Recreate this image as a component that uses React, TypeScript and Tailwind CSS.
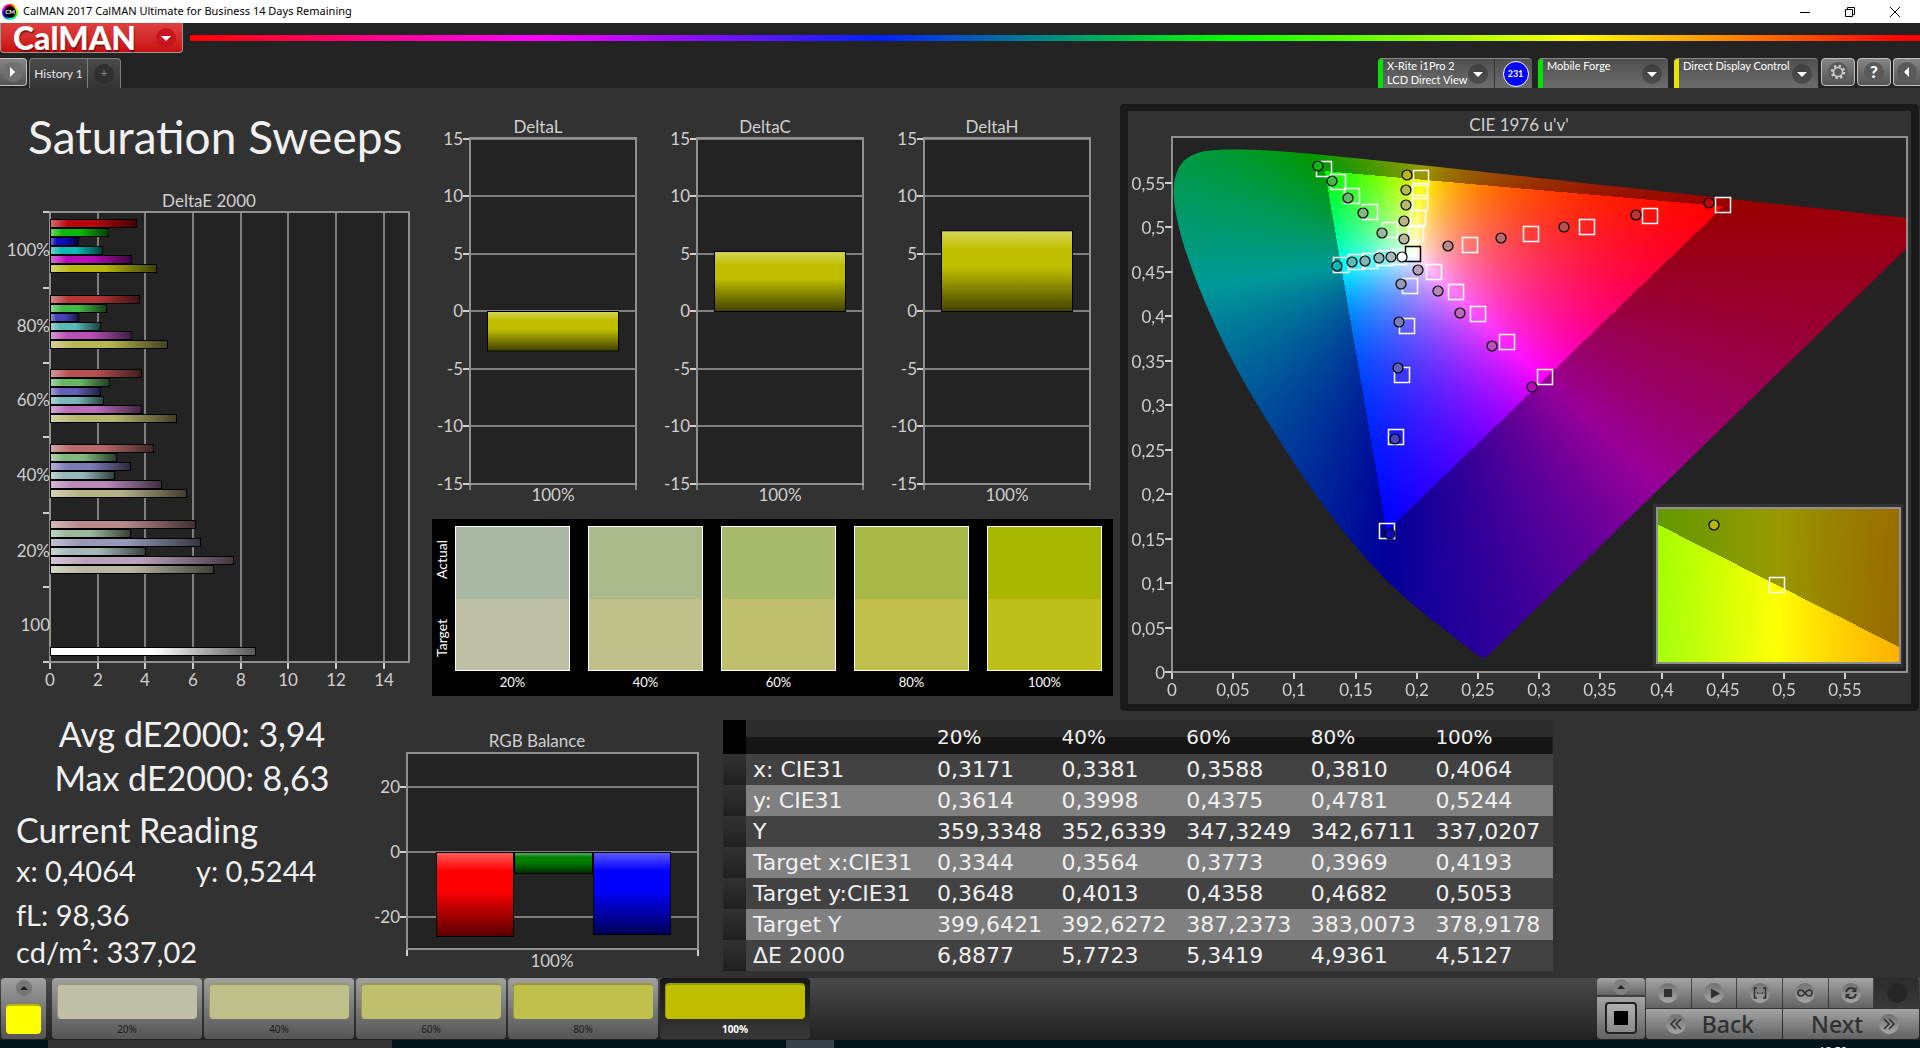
import { useEffect, useRef, type ReactNode } from "react";

type Point = [number, number];

const LEVELS = ["20%", "40%", "60%", "80%", "100%"];

const ACTUAL = ["#a9b8a2", "#a9b98a", "#a8ba6c", "#a8b94a", "#a8b800"];
const TARGET = ["#bfbfa5", "#bfbf8a", "#bfbf6e", "#bfbf4b", "#bfbf19"];
const PATCHES = ["#bfbfa5", "#bfbf8a", "#bfbf6e", "#bfbf4b", "#bfbf00"];

// red, green, blue, cyan, magenta, yellow
const PALETTE: Record<string, string[]> = {
  "100%": ["#b80808", "#0cb80c", "#0c0cb8", "#0cb8b8", "#b80cb8", "#b8b80c"],
  "80%": ["#b83838", "#44b844", "#4444b8", "#5ab8b8", "#b850b8", "#b8b850"],
  "60%": ["#b85050", "#64b864", "#6060b8", "#7ab8b8", "#b86cb8", "#b8b86c"],
  "40%": ["#b86a6a", "#80b880", "#7c7cb8", "#94b8b8", "#b888b8", "#b8b488"],
  "20%": ["#b88a8a", "#9cb89c", "#9898b8", "#a4b8b8", "#b8a0b8", "#b8b8a0"],
};

const DELTA_E = [
  { level: "100%", top: 223, values: [3.64, 2.46, 1.2, 2.21, 3.43, 4.51] },
  { level: "80%", top: 299, values: [3.76, 2.38, 1.2, 2.13, 3.43, 4.94] },
  { level: "60%", top: 373, values: [3.85, 2.5, 2.13, 2.25, 3.85, 5.34] },
  { level: "40%", top: 448, values: [4.35, 2.8, 3.38, 2.71, 4.69, 5.77] },
  { level: "20%", top: 524, values: [6.11, 3.38, 6.32, 4.01, 7.71, 6.89] },
];

const READINGS = [
  ["x: CIE31", "0,3171", "0,3381", "0,3588", "0,3810", "0,4064"],
  ["y: CIE31", "0,3614", "0,3998", "0,4375", "0,4781", "0,5244"],
  ["Y", "359,3348", "352,6339", "347,3249", "342,6711", "337,0207"],
  ["Target x:CIE31", "0,3344", "0,3564", "0,3773", "0,3969", "0,4193"],
  ["Target y:CIE31", "0,3648", "0,4013", "0,4358", "0,4682", "0,5053"],
  ["Target Y", "399,6421", "392,6272", "387,2373", "383,0073", "378,9178"],
  ["ΔE 2000", "6,8877", "5,7723", "5,3419", "4,9361", "4,5127"],
];

// CIE 1931 spectral locus (x, y), 380-700 nm
const LOCUS: Point[] = [
  [0.1741, 0.005], [0.1714, 0.0051], [0.1689, 0.0069], [0.1644, 0.0109],
  [0.1566, 0.0177], [0.151, 0.0227], [0.144, 0.0297], [0.1355, 0.0399],
  [0.1241, 0.0578], [0.1096, 0.0868], [0.0913, 0.1327], [0.0687, 0.2007],
  [0.0454, 0.295], [0.0235, 0.4127], [0.0082, 0.5384], [0.0039, 0.6548],
  [0.0139, 0.7502], [0.0389, 0.812], [0.0743, 0.8338], [0.1142, 0.8262],
  [0.1547, 0.8059], [0.1929, 0.7816], [0.2296, 0.7543], [0.3016, 0.6923],
  [0.3731, 0.6245], [0.4441, 0.5547], [0.5125, 0.4866], [0.5752, 0.4242],
  [0.627, 0.3725], [0.6658, 0.334], [0.6915, 0.3083], [0.719, 0.2809],
  [0.7347, 0.2653],
];

// marker positions inside the chromaticity plot, 20% to 100%
const TARGET_MARKS: Point[] = [
  [298, 108], [359, 97], [415, 90], [478, 79], [551, 68],
  [218, 93], [198, 75], [180, 59], [166, 45], [152, 32],
  [238, 149], [235, 189], [230, 238], [224, 300], [215, 394],
  [227, 120], [213, 121], [198, 124], [184, 125], [169, 128],
  [262, 135], [284, 155], [306, 177], [335, 205], [373, 240],
  [244, 97], [246, 81], [248, 66], [248, 54], [249, 41],
];

const ACTUAL_MARKS: Point[][] = [
  [[276, 109], [329, 101], [392, 90], [464, 78], [537, 66]],
  [[210, 96], [191, 76], [176, 61], [160, 44], [146, 29]],
  [[229, 147], [227, 185], [226, 231], [223, 302], [218, 397]],
  [[219, 120], [207, 121], [193, 124], [180, 125], [165, 129]],
  [[246, 133], [266, 154], [288, 176], [320, 209], [360, 250]],
  [[232, 102], [232, 84], [234, 68], [234, 53], [235, 38]],
];

const toUv = ([x, y]: Point): Point => {
  const d = -2 * x + 12 * y + 3;
  return [(4 * x) / d, (9 * y) / d];
};

/** Linear Rec.709 components, affine in u'v' */
const linear = (u: number, v: number) => {
  const x = 9 * u;
  const y = 4 * v;
  const z = 12 - 3 * u - 20 * v;
  return [
    3.2406 * x - 1.5372 * y - 0.4986 * z,
    -0.9689 * x + 1.8758 * y + 0.0415 * z,
    0.0557 * x - 0.204 * y + 1.057 * z,
  ];
};

const WHITE = linear(0.1978, 0.4683);

/** Fully bright colour; outside the gamut the nearest edge colour towards white, dimmed */
const uvToRgb = (u: number, v: number) => {
  const rgb = linear(u, v);
  let t = 1;
  rgb.forEach((c, i) => {
    if (c < 0) t = Math.min(t, WHITE[i] / (WHITE[i] - c));
  });
  const edge = rgb.map((c, i) => Math.max(0, WHITE[i] + t * (c - WHITE[i])));
  const max = Math.max(...edge);
  return edge.map((c) => (255 * (t < 1 ? 0.6 : 1) * c) / max);
};

interface GamutProps {
  width: number;
  height: number;
  u: Point;
  v: Point;
  clip?: boolean;
}

function Gamut({ width, height, u, v, clip }: GamutProps) {
  const ref = useRef<HTMLCanvasElement>(null);

  useEffect(() => {
    const ctx = ref.current?.getContext("2d");
    if (!ctx) return;
    const image = ctx.createImageData(width, height);
    for (let py = 0; py < height; py++) {
      for (let px = 0; px < width; px++) {
        const [r, g, b] = uvToRgb(
          u[0] + ((px + 0.5) / width) * (u[1] - u[0]),
          v[1] - ((py + 0.5) / height) * (v[1] - v[0]),
        );
        image.data.set([r, g, b, 255], (py * width + px) * 4);
      }
    }
    ctx.putImageData(image, 0, 0);

    if (clip) {
      ctx.globalCompositeOperation = "destination-in";
      ctx.beginPath();
      const points = LOCUS.map(toUv).map(([pu, pv]) => [
        ((pu - u[0]) / (u[1] - u[0])) * width,
        ((v[1] - pv) / (v[1] - v[0])) * height,
      ]);
      // Catmull-Rom spline through the locus, closed by the purple line
      ctx.moveTo(points[0][0], points[0][1]);
      for (let i = 0; i < points.length - 1; i++) {
        const p0 = points[Math.max(0, i - 1)];
        const p1 = points[i];
        const p2 = points[i + 1];
        const p3 = points[Math.min(points.length - 1, i + 2)];
        ctx.bezierCurveTo(
          p1[0] + (p2[0] - p0[0]) / 6,
          p1[1] + (p2[1] - p0[1]) / 6,
          p2[0] - (p3[0] - p1[0]) / 6,
          p2[1] - (p3[1] - p1[1]) / 6,
          p2[0],
          p2[1],
        );
      }
      ctx.closePath();
      ctx.fill();
      ctx.globalCompositeOperation = "source-over";
    }
  }, [width, height, u, v, clip]);

  return <canvas ref={ref} width={width} height={height} className="block" />;
}

const MAIN_U: Point = [0, 0.6008];
const MAIN_V: Point = [0, 0.6008];
const INSET_U: Point = [0.1805, 0.2277];
const INSET_V: Point = [0.5493, 0.5565];

function Shades() {
  return (
    <svg width="0" height="0" className="absolute">
      <defs>
        <linearGradient id="shade-x">
          <stop offset="0" stopColor="#fff" stopOpacity="0.4" />
          <stop offset="0.2" stopColor="#fff" stopOpacity="0" />
          <stop offset="0.5" stopColor="#000" stopOpacity="0" />
          <stop offset="1" stopColor="#000" stopOpacity="0.65" />
        </linearGradient>
        <linearGradient id="shade-y" x2="0" y2="1">
          <stop offset="0" stopColor="#fff" stopOpacity="0.35" />
          <stop offset="0.22" stopColor="#fff" stopOpacity="0" />
          <stop offset="0.45" stopColor="#000" stopOpacity="0" />
          <stop offset="1" stopColor="#000" stopOpacity="0.65" />
        </linearGradient>
      </defs>
    </svg>
  );
}

interface BarProps {
  x: number;
  y: number;
  width: number;
  height: number;
  fill: string;
  shade: string;
}

function Bar({ x, y, width, height, fill, shade }: BarProps) {
  return (
    <>
      <rect x={x} y={y} width={width} height={height} fill="#000" />
      <rect x={x + 1} y={y + 1} width={width - 2} height={height - 2} fill={fill} />
      <rect x={x + 1} y={y + 1} width={width - 2} height={height - 2} fill={`url(#${shade})`} />
    </>
  );
}

const chartClass = "block h-auto w-full fill-[#cfcfcf] font-[Lato,sans-serif] text-[17px]";

function DeltaEChart() {
  const scale = 23.83;
  return (
    <svg viewBox="0 190 430 510" className={chartClass} role="img" aria-label="DeltaE 2000">
      <text x="209" y="207" textAnchor="middle">DeltaE 2000</text>
      <rect x="50" y="212" width="359" height="450" fill="#232323" />
      {[2, 4, 6, 8, 10, 12, 14].map((n) => (
        <path key={n} d={`M${Math.round(50 + n * scale)} 212v450`} stroke="#808080" strokeWidth="2" />
      ))}
      {[0, 2, 4, 6, 8, 10, 12, 14].map((n) => (
        <g key={n}>
          <path d={`M${Math.round(50 + n * scale)} 663v6`} stroke="#cfcfcf" strokeWidth="2" />
          <text x={Math.round(50 + n * scale)} y="686" textAnchor="middle">{n}</text>
        </g>
      ))}
      {[212, 288, 363, 437, 513, 587, 662].map((y) => (
        <path key={y} d={`M43 ${y}h7`} stroke="#cfcfcf" strokeWidth="2" />
      ))}
      <rect x="50" y="212" width="359" height="450" fill="none" stroke="#909090" strokeWidth="2" />
      {DELTA_E.map(({ level, top, values }) => (
        <g key={level}>
          <text x="50" y={top + 33} textAnchor="end">{level}</text>
          {values.map((value, i) => (
            <Bar
              key={i}
              x={50}
              y={Math.round(top + i * 8.9) - 4}
              width={Math.round(value * scale)}
              height={9}
              fill={PALETTE[level][i]}
              shade="shade-x"
            />
          ))}
        </g>
      ))}
      <text x="50" y="631" textAnchor="end">100</text>
      <Bar x={50} y={647} width={206} height={9} fill="#ffffff" shade="shade-x" />
    </svg>
  );
}

function DeltaChart({ x, title, value }: { x: number; title: string; value: number }) {
  const height = Math.abs(value) * 11.5;
  return (
    <g>
      <text x={x + 68} y="133" textAnchor="middle">{title}</text>
      <rect x={x} y="138" width="166" height="346" fill="#232323" />
      {[15, 10, 5, 0, -5, -10, -15].map((n) => (
        <g key={n}>
          <path d={`M${x} ${Math.round(311 - n * 11.5)}h166`} stroke="#808080" strokeWidth="2" />
          <path d={`M${x - 7} ${Math.round(311 - n * 11.5)}h7`} stroke="#cfcfcf" strokeWidth="2" />
          <text x={x - 7} y={Math.round(317 - n * 11.5)} textAnchor="end">{n}</text>
        </g>
      ))}
      <rect x={x} y="138" width="166" height="346" fill="none" stroke="#909090" strokeWidth="2" />
      <path d={`M${x} 484v6M${x + 166} 484v6`} stroke="#cfcfcf" strokeWidth="1" />
      <Bar
        x={x + 17}
        y={value > 0 ? 312 - height : 311}
        width={132}
        height={height}
        fill="#bfbf00"
        shade="shade-y"
      />
      <text x={x + 83} y="501" textAnchor="middle">100%</text>
    </g>
  );
}

function RgbBalanceChart() {
  return (
    <svg viewBox="360 720 360 258" className={chartClass} role="img" aria-label="RGB Balance">
      <text x="537" y="747" textAnchor="middle">RGB Balance</text>
      <rect x="407" y="753" width="291" height="196" fill="#232323" />
      {[20, 0, -20].map((n) => (
        <g key={n}>
          <path d={`M407 ${Math.round(852 - n * 3.25)}h291`} stroke="#808080" strokeWidth="2" />
          <path d={`M400 ${Math.round(852 - n * 3.25)}h7`} stroke="#cfcfcf" strokeWidth="2" />
          <text x="400" y={Math.round(858 - n * 3.25)} textAnchor="end">{n}</text>
        </g>
      ))}
      <rect x="407" y="753" width="291" height="196" fill="none" stroke="#909090" strokeWidth="2" />
      <path d="M407 950v6M698 950v6" stroke="#cfcfcf" strokeWidth="2" />
      <Bar x={436} y={852} width={78} height={85} fill="#ff0000" shade="shade-y" />
      <Bar x={514} y={852} width={79} height={22} fill="#008000" shade="shade-y" />
      <Bar x={593} y={852} width={78} height={83} fill="#0000ff" shade="shade-y" />
      <text x="552" y="967" textAnchor="middle">100%</text>
    </svg>
  );
}

const Square = ({ x, y, stroke = "#fff" }: { x: number; y: number; stroke?: string }) => (
  <rect x={x - 7.5} y={y - 7.5} width="15" height="15" fill="none" stroke={stroke} strokeWidth="1.5" />
);

function CieChart() {
  const ticks = [0, 1, 2, 3, 4, 5, 6, 7, 8, 9, 10, 11];
  const label = (n: number) => String((n * 5) / 100).replace(".", ",");
  return (
    <svg viewBox="1128 111 783 593" className={chartClass} role="img" aria-label="CIE 1976 u'v'">
      <text x="1519" y="131" textAnchor="middle">CIE 1976 u'v'</text>
      <rect x="1172" y="137" width="735" height="535" fill="#232323" />
      <foreignObject x="1172" y="137" width="735" height="535">
        <Gamut width={735} height={535} u={MAIN_U} v={MAIN_V} clip />
      </foreignObject>
      <rect x="1172" y="137" width="735" height="535" fill="none" stroke="#909090" strokeWidth="2" />
      {ticks.map((n) => (
        <g key={n}>
          <path d={`M${Math.round(1172 + n * 61.2)} 673v6`} stroke="#cfcfcf" strokeWidth="2" />
          <text x={Math.round(1172 + n * 61.2)} y="696" textAnchor="middle">{label(n)}</text>
          <path d={`M1165 ${Math.round(672 - n * 44.5)}h7`} stroke="#cfcfcf" strokeWidth="2" />
          <text x="1165" y={Math.round(679 - n * 44.5)} textAnchor="end">{label(n)}</text>
        </g>
      ))}

      <g transform="translate(1172 137)">
        {TARGET_MARKS.map(([x, y]) => (
          <Square key={`${x}-${y}`} x={x} y={y} />
        ))}
        <Square x={241} y={117} stroke="#000" />
        {ACTUAL_MARKS.map((marks, hue) =>
          marks.map(([x, y], i) => (
            <circle
              key={`${x}-${y}`}
              cx={x}
              cy={y}
              r="5"
              fill={PALETTE[LEVELS[i]][hue]}
              stroke="#000"
              strokeWidth="1.2"
            />
          )),
        )}
        <circle cx="230" cy="120" r="5" fill="#fff" stroke="#000" strokeWidth="1.2" />
      </g>

      {/* magnified view around the selected patch */}
      <rect x="1653" y="504" width="250" height="163" fill="#323232" />
      <foreignObject x="1657" y="508" width="243" height="155">
        <Gamut width={243} height={155} u={INSET_U} v={INSET_V} />
      </foreignObject>
      <rect x="1657" y="508" width="243" height="155" fill="none" stroke="#909090" strokeWidth="2" />
      <Square x={1777} y={585} />
      <circle cx="1714" cy="525" r="5" fill="#b8b80c" stroke="#000" strokeWidth="1.2" />
    </svg>
  );
}

function SwatchPanel() {
  return (
    <div className="mt-[9px] mr-[7px] ml-0.5 flex h-[177px] bg-black pt-[7px] pr-[11px] font-[Lato,sans-serif] text-[13px] text-white">
      <div className="flex h-[145px] w-[23px] shrink-0 rotate-180 flex-row-reverse items-center justify-center gap-3 pl-1 text-[14px] [writing-mode:vertical-rl]">
        <span className="flex-1 text-center">Actual</span>
        <span className="flex-1 text-center">Target</span>
      </div>
      <div className="grid flex-1 grid-cols-5 gap-[18px]">
        {LEVELS.map((level, i) => (
          <div key={level}>
            <div className="h-[145px] border border-white">
              <div className="h-1/2" style={{ background: ACTUAL[i] }} />
              <div className="h-1/2" style={{ background: TARGET[i] }} />
            </div>
            <p className="text-center leading-[22px]">{level}</p>
          </div>
        ))}
      </div>
    </div>
  );
}

function ReadingsTable() {
  return (
    <table className="ml-[3px] w-[830px] table-fixed border-collapse text-left font-['DejaVu_Sans',sans-serif] text-[22px] text-[#f0f0f0]">
      <colgroup>
        <col className="w-[23px]" />
        <col className="w-[184px]" />
        <col span={5} />
      </colgroup>
      <thead>
        <tr className="h-[34px] bg-linear-to-b from-[#2c2c2c] from-50% to-[#151515] to-50% text-[20px]">
          <td className="bg-black p-0" />
          <td className="p-0" />
          {LEVELS.map((level) => (
            <th key={level} scope="col" className="p-0 pl-[7px] leading-[34px] font-normal">{level}</th>
          ))}
        </tr>
      </thead>
      <tbody>
        {READINGS.map(([name, ...values], i) => (
          <tr key={name} className={i % 2 ? "h-[31px] bg-[#808080]" : "h-[31px] bg-[#424242]"}>
            <td className="bg-linear-to-b from-[#323232] to-[#202020] p-0" />
            <th scope="row" className="p-0 pl-[7px] leading-[31px] font-normal whitespace-nowrap">{name}</th>
            {values.map((value, k) => (
              <td key={k} className="p-0 pl-[7px] leading-[31px]">{value}</td>
            ))}
          </tr>
        ))}
      </tbody>
    </table>
  );
}

function Chevron() {
  return (
    <svg viewBox="0 0 20 20" className="size-5 shrink-0">
      <circle cx="10" cy="10" r="10" fill="#000" fillOpacity="0.25" />
      <path d="M5 8h10l-5 5z" fill="#fff" />
    </svg>
  );
}

function Device({ color, label, className, children }: {
  color: string;
  label: ReactNode;
  className: string;
  children?: ReactNode;
}) {
  return (
    <div className={`flex h-[30px] overflow-hidden rounded-t border-t border-[#888] bg-linear-to-b from-[#505050] to-[#6c6c6c] ${className}`}>
      <button type="button" aria-haspopup="menu" className="flex flex-1 items-center pr-1.5 text-left">
        <span className={`mr-1 w-[5px] self-stretch ${color}`} />
        <span className="flex-1 self-start text-[11px] leading-[14px] whitespace-nowrap text-white">{label}</span>
        <Chevron />
      </button>
      {children}
    </div>
  );
}

const toolClass =
  "flex h-7 items-center justify-center rounded border border-[#c0c0c0] bg-linear-to-b from-[#868686] to-[#555]";

function Header() {
  return (
    <header className="bg-[#232323] font-[Lato,sans-serif]">
      <div className="flex h-[30px]">
        <button
          type="button"
          className="flex w-[183px] items-center rounded-b border border-t-0 border-[#999] bg-linear-to-b from-[#e04040] to-[#c80c0c] pl-3 text-[32px] leading-none font-black text-white [text-shadow:1px_2px_1px_#0006]"
        >
          <span className="flex-1 text-left leading-[28px]">CalMAN</span>
          <svg viewBox="0 0 20 20" className="mr-1.5 size-5">
            <circle cx="10" cy="10" r="10" fill="#c8141e" />
            <path d="M5 8h10l-5 5z" fill="#fff" />
          </svg>
        </button>
        <div className="mt-3 ml-[7px] h-1.5 flex-1 [background-image:linear-gradient(to_right,#f00,#f0f_20%,#0020ff_40%,#0f0_60%,#ff0_80%,#f00_99%)]" />
      </div>

      <div className="flex h-[35px] items-start pt-[5px]">
        <button type="button" aria-label="Expand" className={`${toolClass} w-[27px] rounded-l-none border-l-0`}>
          <svg viewBox="0 0 20 20" className="size-5">
            <circle cx="10" cy="10" r="10" fill="#707070" />
            <path d="M7 5v10l5-5z" fill="#fff" />
          </svg>
        </button>
        <div className="ml-0.5 flex h-[30px] rounded-t border border-b-0 border-[#808080] bg-linear-to-b from-[#4c4c4c] to-[#333] text-[12px] text-[#e8e8e8]">
          <button type="button" className="w-[58px] border-r border-[#808080]">History 1</button>
          <button type="button" aria-label="Add history" className="flex w-8 items-center justify-center">
            <span className="size-5 rounded-full bg-[#303030] text-center leading-[18px] text-[#888]">+</span>
          </button>
        </div>

        <div className="ml-auto flex">
          <Device
            color="bg-[#00e400]"
            className="w-[154px]"
            label={<>X-Rite i1Pro 2<br />LCD Direct View</>}
          >
            <span className="flex w-[38px] items-center justify-center border-l border-[#333] pl-1">
              <span className="flex size-[26px] items-center justify-center rounded-full border border-white bg-[#00f] text-[9px] font-bold text-white">
                231
              </span>
            </span>
          </Device>
          <Device color="bg-[#00e400]" className="ml-1.5 w-[130px]" label="Mobile Forge" />
          <Device color="bg-[#e8e400]" className="ml-1.5 w-[144px]" label="Direct Display Control" />
          <button type="button" aria-label="Settings" className={`${toolClass} ml-[3px] w-[34px]`}>
            <svg viewBox="0 0 22 22" className="size-[22px]">
              <circle cx="11" cy="11" r="10" fill="#5a5a5a" />
              <circle cx="11" cy="11" r="6" fill="none" stroke="#ccc" strokeWidth="2.5" strokeDasharray="2.35 2.35" />
              <circle cx="11" cy="11" r="4.5" fill="none" stroke="#ccc" strokeWidth="1.6" />
            </svg>
          </button>
          <button type="button" aria-label="Help" className={`${toolClass} ml-0.5 w-[34px]`}>
            <span className="size-5 rounded-full bg-[#5a5a5a] text-[17px] leading-5 font-black text-white">?</span>
          </button>
          <button type="button" aria-label="Collapse" className={`${toolClass} ml-0.5 w-[27px] rounded-r-none border-r-0`}>
            <svg viewBox="0 0 20 20" className="size-5">
              <circle cx="10" cy="10" r="10" fill="#5a5a5a" />
              <path d="M12 5v10l-5-5z" fill="#fff" />
            </svg>
          </button>
        </div>
      </div>
    </header>
  );
}

function TitleBar() {
  return (
    <div className="flex h-[23px] items-center bg-white pr-0.5 text-black">
      <span className="ml-0.5 flex size-4 items-center justify-center rounded-full bg-[conic-gradient(#f00,#ff0,#0f0,#0ff,#00f,#f0f,#f00)]">
        <span className="flex size-3 items-center justify-center rounded-full bg-black font-[Lato,sans-serif] text-[6px] font-bold text-white">CM</span>
      </span>
      <h1 className="ml-[5px] flex-1 font-['Noto_Sans',sans-serif] text-[11px]">
        CalMAN 2017 CalMAN Ultimate for Business 14 Days Remaining
      </h1>
      <button type="button" aria-label="Minimize" className="flex w-[46px] justify-center">
        <svg width="10" height="10" stroke="#000"><path d="M0 5.5h10" /></svg>
      </button>
      <button type="button" aria-label="Restore" className="flex w-[44px] justify-center">
        <svg width="10" height="10" fill="none" stroke="#000">
          <path d="M.5 2.5h7v7h-7zM2.5 2.5v-2h7v7h-2" />
        </svg>
      </button>
      <button type="button" aria-label="Close" className="flex w-[46px] justify-center">
        <svg width="10" height="10" stroke="#000"><path d="M0 0l10 10M10 0L0 10" /></svg>
      </button>
    </div>
  );
}

const keyClass = "flex items-center justify-center bg-linear-to-b from-[#a4a4a4] to-[#636363]";

function RoundIcon({ children }: { children?: ReactNode }) {
  return (
    <svg viewBox="0 0 20 20" className="size-5" fill="none" stroke="#303030" strokeWidth="1.6">
      <defs>
        <linearGradient id="knob" x2="0" y2="1">
          <stop offset="0" stopColor="#707070" />
          <stop offset="1" stopColor="#a6a6a6" />
        </linearGradient>
      </defs>
      <circle cx="10" cy="10" r="10" fill="url(#knob)" stroke="none" />
      {children}
    </svg>
  );
}

const CONTROLS: { name: string; icon: ReactNode }[] = [
  { name: "Stop", icon: <path d="M6 6h8v8H6z" fill="#303030" stroke="none" /> },
  { name: "Play", icon: <path d="M7 5.5v10l9-5z" fill="#303030" stroke="none" /> },
  {
    name: "Read series",
    icon: (
      <>
        <path d="M7 5H4.500v10H7M13 5h2.500v10H13" />
        <path d="M7 9h1v2H7zM9.500 9h1v2h-1zM12 9h1v2h-1z" fill="#303030" stroke="none" />
      </>
    ),
  },
  {
    name: "Continuous",
    icon: <path d="M10 10c-1.500-2-2.500-3-4-3a3 3 0 0 0 0 6c1.500 0 2.500-1 4-3s2.500-3 4-3a3 3 0 0 1 0 6c-1.500 0-2.500-1-4-3z" />,
  },
  {
    name: "Refresh",
    icon: (
      <>
        <path d="M5 9a5 5 0 0 1 8.500-2.500M15 11a5 5 0 0 1-8.500 2.500" strokeWidth="2" />
        <path d="M15.500 4v5h-5zM4.500 16v-5h5z" fill="#303030" stroke="none" />
      </>
    ),
  },
];

function PatchBar() {
  return (
    <footer className="flex h-[62px] bg-linear-to-b from-[#4a4a4a] to-[#222] pr-px pb-px pl-px font-['Noto_Sans',sans-serif]">
      <button
        type="button"
        aria-label="Current patch"
        className="flex w-[45px] flex-col items-center justify-between rounded bg-linear-to-b from-[#a0a0a0] to-[#555] pt-0.5 pb-[5px]"
      >
        <svg viewBox="0 0 16 16" className="size-4">
          <circle cx="8" cy="8" r="8" fill="#777" />
          <path d="M4 10h8l-4-4z" fill="#222" />
        </svg>
        <span className="h-[30px] w-[35px] rounded border-t-2 border-[#b8b800] bg-[#ff0]" />
      </button>
      <div className="ml-1.5 flex gap-0.5">
        {LEVELS.map((level, i) => {
          const selected = level === "100%";
          return (
            <button
              key={level}
              type="button"
              className={
                selected
                  ? "w-[150px] rounded bg-linear-to-b from-[#181818] to-[#383838] px-[5px] pt-[5px] text-[10px] font-bold text-white"
                  : "w-[150px] rounded bg-linear-to-b from-[#a0a0a0] to-[#555] px-[5px] pt-[5px] text-[10px] text-[#1c1c1c]"
              }
            >
              <span
                className="block h-9 rounded border-t-2 border-l border-black/20 bg-clip-border"
                style={{ backgroundColor: PATCHES[i] }}
              />
              <span className="block leading-5">{level}</span>
            </button>
          );
        })}
      </div>

      <div className="ml-auto flex gap-px">
        <div className="flex w-12 flex-col gap-0.5">
          <button type="button" aria-label="Show patch menu" className={`${keyClass} h-[17px] rounded-t`}>
            <svg viewBox="0 0 16 16" className="size-4">
              <circle cx="8" cy="8" r="8" fill="#808080" />
              <path d="M4 10h8l-4-4z" fill="#222" />
            </svg>
          </button>
          <button type="button" aria-label="Patch window" className={`${keyClass} flex-1 rounded-b`}>
            <span className="flex size-8 items-center justify-center rounded border-2 border-[#222] bg-linear-to-b from-[#b0b0b0] to-[#888]">
              <span className="size-3.5 bg-black" />
            </span>
          </button>
        </div>
        <div className="flex w-[273px] flex-col gap-px">
          <div className="grid h-[30px] grid-cols-6 gap-px">
            {CONTROLS.map(({ name, icon }) => (
              <button key={name} type="button" aria-label={name} className={keyClass}>
                <RoundIcon>{icon}</RoundIcon>
              </button>
            ))}
            <div className="flex items-center justify-center rounded-tr bg-linear-to-b from-[#2c2c2c] to-[#383838]">
              <span className="size-5 rounded-full bg-[#262626]" />
            </div>
          </div>
          <div className="grid flex-1 grid-cols-2 gap-px text-[23px] font-medium text-[#303030]">
            <button type="button" className={`${keyClass} gap-4 rounded-bl pr-2 leading-none`}>
              <RoundIcon><path d="M10 5l-5 5 5 5M15 5l-5 5 5 5" /></RoundIcon>
              Back
            </button>
            <button type="button" className={`${keyClass} gap-4 rounded-br pl-2 leading-none`}>
              Next
              <RoundIcon><path d="M5 5l5 5-5 5M10 5l5 5-5 5" /></RoundIcon>
            </button>
          </div>
        </div>
      </div>
    </footer>
  );
}

export default function App() {
  return (
    <div className="flex min-h-screen flex-col bg-[#323232]">
      <Shades />
      <TitleBar />
      <Header />

      <main className="flex-1">
        <div className="grid grid-cols-[430fr_690fr_800fr]">
          <section className="min-w-0">
            <h2 className="h-[102px] pl-7 font-[Lato,sans-serif] text-[46px] leading-[98px] whitespace-nowrap text-[#f0f0f0]">
              Saturation Sweeps
            </h2>
            <DeltaEChart />
          </section>
          <section className="min-w-0 pt-[22px]">
            <svg viewBox="430 110 690 400" className={chartClass} role="img" aria-label="DeltaL, DeltaC and DeltaH">
              <DeltaChart x={470} title="DeltaL" value={-3.5} />
              <DeltaChart x={697} title="DeltaC" value={5.3} />
              <DeltaChart x={924} title="DeltaH" value={7.1} />
            </svg>
            <SwatchPanel />
          </section>
          <section className="mt-4 mr-px min-w-0 rounded-sm border-x-8 border-y-7 border-[#1a1a1a]">
            <CieChart />
          </section>
        </div>

        <div className="grid grid-cols-[360fr_360fr_1200fr] items-start pt-[9px]">
          <section className="min-w-0 pl-4 font-[Lato,sans-serif] text-[29px] whitespace-nowrap text-[#f0f0f0]">
            <div className="-mt-2 pl-2 text-center text-[34px] leading-[44px]">
              <p>Avg dE2000: 3,94</p>
              <p>Max dE2000: 8,63</p>
            </div>
            <h3 className="mt-2 text-[34px] leading-[44px]">Current Reading</h3>
            <div className="flex leading-[38px]">
              <p className="w-[180px]">x: 0,4064</p>
              <p>y: 0,5244</p>
            </div>
            <p className="mt-1.5 leading-[38px]">fL: 98,36</p>
            <p className="leading-[36px]">cd/m²: 337,02</p>
          </section>
          <RgbBalanceChart />
          <ReadingsTable />
        </div>
      </main>

      <PatchBar />
      <div className="flex h-2 overflow-hidden bg-[#00141c]">
        <span className="ml-12 w-[344px] bg-[#323232]" />
        <span className="ml-[394px] w-12 bg-[#35424a]" />
        <span className="mt-1.5 mr-[73px] ml-auto font-['Noto_Sans',sans-serif] text-[11px] leading-[10px] text-white">18:59</span>
      </div>
    </div>
  );
}
